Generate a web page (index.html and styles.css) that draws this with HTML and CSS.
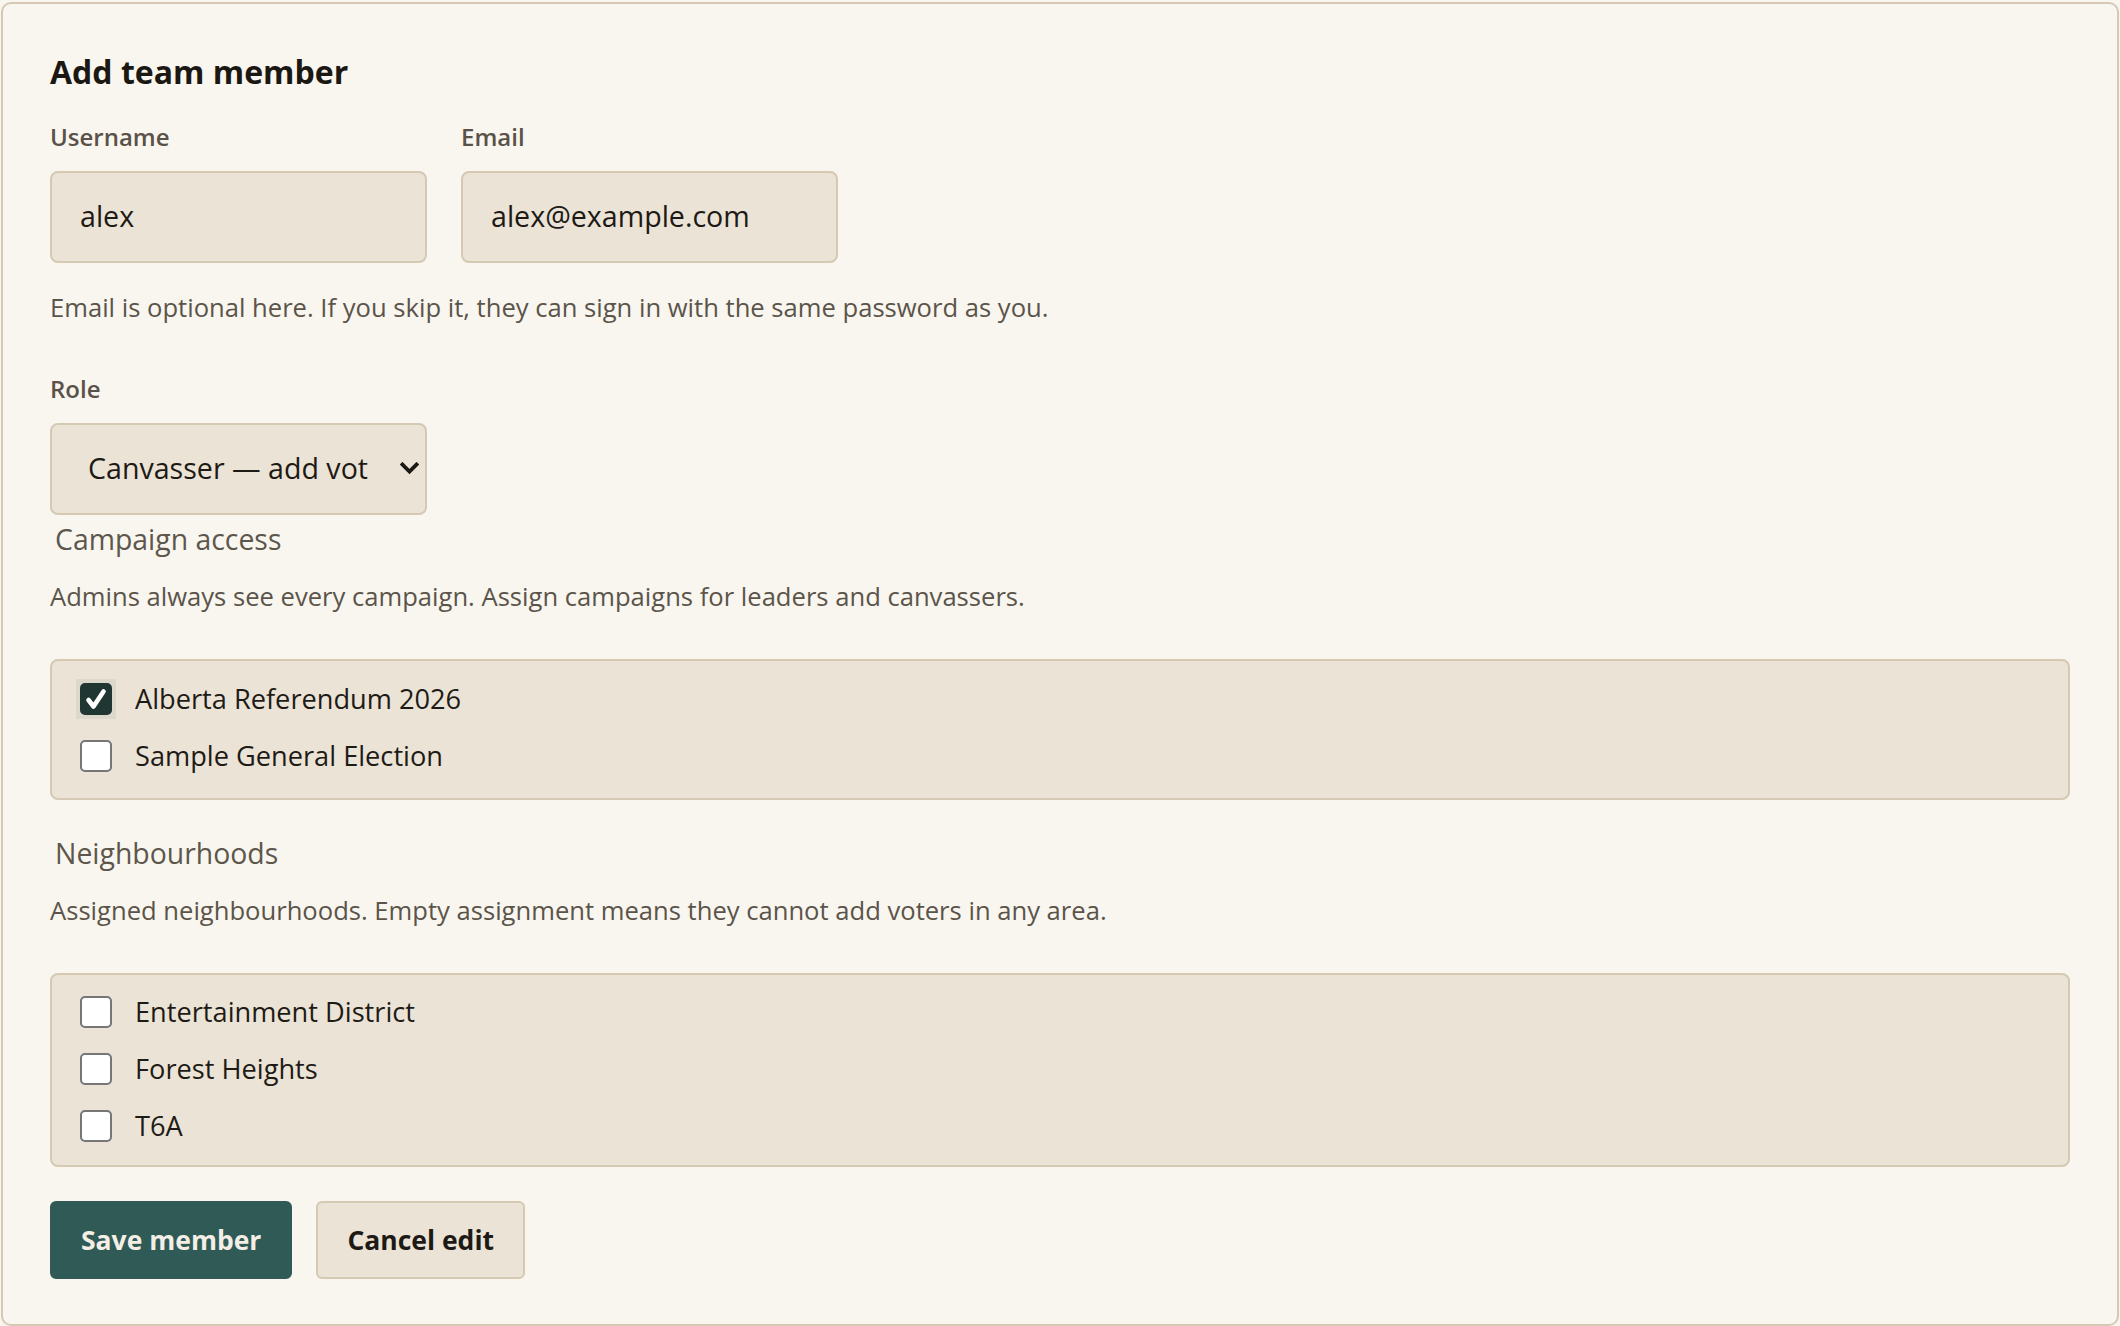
FILE: index.html
```html
<!DOCTYPE html>
<html lang="en">
<head>
<meta charset="utf-8">
<title>Add team member</title>
<link rel="stylesheet" href="styles.css">
</head>
<body>
<form class="card">
  <h2 class="title">Add team member</h2>
  <div class="fields-row">
    <label class="field">
      <span class="field-label">Username</span>
      <input class="text-input" type="text" value="alex">
    </label>
    <label class="field">
      <span class="field-label">Email</span>
      <input class="text-input" type="email" value="alex@example.com">
    </label>
  </div>
  <p class="help help-email">Email is optional here. If you skip it, they can sign in with the same password as you.</p>

  <label class="field field-role">
    <span class="field-label">Role</span>
    <span class="select-wrap">
      <select class="select">
        <option>Canvasser — add voters in assigned neighbourhoods</option>
        <option>Leader</option>
        <option>Admin</option>
      </select>
      <svg class="chev" viewBox="0 0 19 13" aria-hidden="true"><path d="M2.5 2.5 L9.5 9.5 L16.5 2.5" fill="none" stroke="#1d1a15" stroke-width="3.8" stroke-linecap="square"/></svg>
    </span>
  </label>

  <div class="group group-campaign" role="group">
    <div class="group-title">Campaign access</div>
    <p class="help group-help">Admins always see every campaign. Assign campaigns for leaders and canvassers.</p>
    <div class="checklist checklist-campaign">
      <label class="option">
        <span class="box"><input class="cb" type="checkbox" checked><svg class="tick" viewBox="0 0 40 40" aria-hidden="true"><path d="M12.5 21 L17.5 27.5 L27.5 12.5" fill="none" stroke="#ffffff" stroke-width="4.6" stroke-linecap="round" stroke-linejoin="round"/></svg></span>
        <span class="option-text">Alberta Referendum 2026</span>
      </label>
      <label class="option">
        <span class="box"><input class="cb" type="checkbox"></span>
        <span class="option-text">Sample General Election</span>
      </label>
    </div>
  </div>

  <div class="group group-neigh" role="group">
    <div class="group-title">Neighbourhoods</div>
    <p class="help group-help">Assigned neighbourhoods. Empty assignment means they cannot add voters in any area.</p>
    <div class="checklist">
      <label class="option">
        <span class="box"><input class="cb" type="checkbox"></span>
        <span class="option-text">Entertainment District</span>
      </label>
      <label class="option">
        <span class="box"><input class="cb" type="checkbox"></span>
        <span class="option-text">Forest Heights</span>
      </label>
      <label class="option">
        <span class="box"><input class="cb" type="checkbox"></span>
        <span class="option-text">T6A</span>
      </label>
    </div>
  </div>

  <div class="actions">
    <button class="btn btn-primary" type="submit">Save member</button>
    <button class="btn btn-secondary" type="button">Cancel edit</button>
  </div>
</form>
</body>
</html>
```

FILE: styles.css
```css
html, body {
  margin: 0;
  padding: 0;
  background: #f9f6ef;
}

body {
  font-family: "Open Sans", "Noto Sans", sans-serif;
  color: #1d1a15;
}

.card {
  margin: 2px 1px 2px;
  border: 2px solid #d5c9b4;
  border-radius: 10px;
  background: #f9f6ef;
  padding: 48px 47px 45px;
}

.title {
  margin: 0;
  font-size: 32px;
  line-height: 40px;
  font-weight: 700;
  color: #1b1813;
}

.fields-row {
  display: flex;
  gap: 34px;
  margin-top: 30px;
}

.field {
  display: flex;
  flex-direction: column;
  width: 377px;
}

.field-label {
  font-size: 24px;
  line-height: 30px;
  font-weight: 600;
  color: #5a5248;
  margin-bottom: 19px;
}

.text-input {
  box-sizing: border-box;
  width: 100%;
  height: 92px;
  margin: 0;
  border: 2px solid #d5c9b4;
  border-radius: 8px;
  background: #ebe3d6;
  padding: 0 28px 4px;
  font-family: "Open Sans", "Noto Sans", sans-serif;
  font-size: 28.6px;
  color: #1d1a15;
  outline: none;
}

.help {
  margin: 0;
  font-size: 25.6px;
  line-height: 32px;
  color: #5b544a;
}

.help-email {
  margin-top: 29px;
}

.field-role {
  margin-top: 50px;
}

.select-wrap {
  position: relative;
  display: block;
  width: 100%;
}

.select {
  appearance: none;
  -webkit-appearance: none;
  box-sizing: border-box;
  display: block;
  width: 100%;
  height: 92px;
  margin: 0;
  border: 2px solid #d5c9b4;
  border-radius: 8px;
  background: #ebe3d6;
  padding: 0 57px 4px 36px;
  font-family: "Open Sans", "Noto Sans", sans-serif;
  font-size: 28.6px;
  color: #1d1a15;
  outline: none;
}

.chev {
  position: absolute;
  left: 350px;
  top: 39px;
  width: 19px;
  height: 13px;
  pointer-events: none;
}

.group-title {
  font-size: 28.4px;
  line-height: 32px;
  color: #5d564c;
  padding-left: 5px;
}

.group-campaign {
  margin-top: 8px;
}

.group-neigh {
  margin-top: 37px;
}

.group-help {
  margin-top: 26px;
}

.checklist {
  margin-top: 46px;
  border: 2px solid #d5c9b4;
  border-radius: 8px;
  background: #ebe3d6;
  padding: 18px 24px 20px;
  display: flex;
  flex-direction: column;
  gap: 19px;
}

.checklist-campaign {
  padding-top: 19px;
  padding-bottom: 23px;
}

.option {
  display: flex;
  align-items: center;
  gap: 19px;
  height: 38px;
  font-size: 27.2px;
  line-height: 38px;
  color: #1e1b16;
}

.box {
  position: relative;
  width: 40px;
  height: 40px;
  margin: -1px 0;
  display: grid;
  place-items: center;
  flex: none;
}

.box:has(.cb:checked) {
  background: #dcd9cc;
}

.cb {
  appearance: none;
  -webkit-appearance: none;
  box-sizing: border-box;
  margin: 0;
  width: 32px;
  height: 32px;
  border: 2px solid #767676;
  border-radius: 5px;
  background: #ffffff;
}

.cb:checked {
  background: #1f3632;
  border-color: #1f3632;
}

.tick {
  position: absolute;
  left: 0;
  top: 0;
  width: 40px;
  height: 40px;
  pointer-events: none;
}

.actions {
  display: flex;
  gap: 24px;
  margin-top: 34px;
}

.btn {
  box-sizing: border-box;
  height: 78px;
  margin: 0;
  padding: 0 29px;
  border: 2px solid #d5c9b4;
  border-radius: 6px;
  font-family: "Open Sans", "Noto Sans", sans-serif;
  font-size: 26.5px;
  font-weight: 700;
  cursor: pointer;
}

.btn-primary {
  background: #2f5a55;
  border-color: #2f5a55;
  color: #f3efe6;
}

.btn-secondary {
  background: #ebe3d6;
  border-color: #d5c9b4;
  color: #1d1a15;
}
```
